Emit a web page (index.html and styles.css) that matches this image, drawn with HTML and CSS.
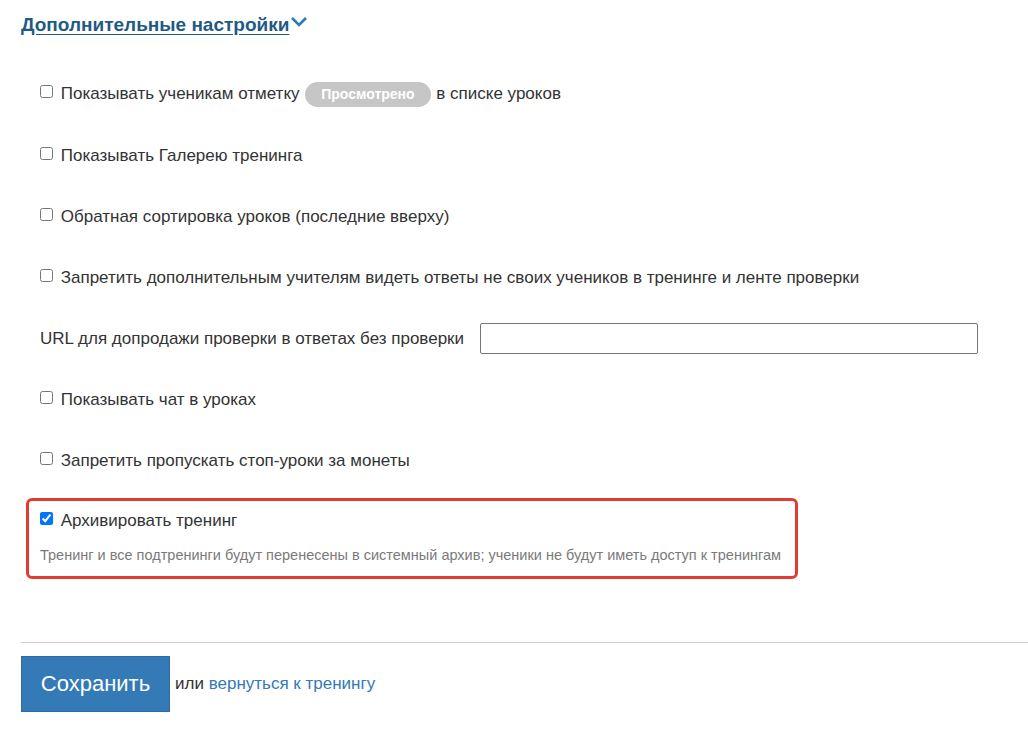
FILE: index.html
```html
<html>
	<head>
		<title>Дополнительные настройки</title>
		<meta charset="utf-8"/>
		<link rel="stylesheet" href="styles.css">
	</head>
	<body>
		<div class="page">
			<a class="toggle" href="#">Дополнительные настройки</a><svg class="chevron" width="18" height="12" viewBox="0 0 18 12"><path d="M2 2 L9 9 L16 2" fill="none" stroke="#2b7bb9" stroke-width="2.6"/></svg>

			<div class="settings">
				<div class="row">
					<label><input type="checkbox"> Показывать ученикам отметку <span class="badge">Просмотрено</span> в списке уроков</label>
				</div>
				<div class="row">
					<label><input type="checkbox"> Показывать Галерею тренинга</label>
				</div>
				<div class="row">
					<label><input type="checkbox"> Обратная сортировка уроков (последние вверху)</label>
				</div>
				<div class="row">
					<label><input type="checkbox"> Запретить дополнительным учителям видеть ответы не своих учеников в тренинге и ленте проверки</label>
				</div>
				<div class="row url-row">
					<span class="url-label">URL для допродажи проверки в ответах без проверки</span>
					<input type="text" class="url-input">
				</div>
				<div class="row">
					<label><input type="checkbox"> Показывать чат в уроках</label>
				</div>
				<div class="row">
					<label><input type="checkbox"> Запретить пропускать стоп-уроки за монеты</label>
				</div>

				<div class="archive">
					<label><input type="checkbox" checked> Архивировать тренинг</label>
					<div class="hint">Тренинг и все подтренинги будут перенесены в системный архив; ученики не будут иметь доступ к тренингам</div>
				</div>
			</div>

			<div class="actions">
				<button class="save">Сохранить</button>
				<span class="or">или <a href="#">вернуться к тренингу</a></span>
			</div>
		</div>
	</body>
</html>
```

FILE: styles.css
```css
body {
	margin: 0;
	background-color: white;
	font-family: "Liberation Sans", Arial, sans-serif;
	color: #333;
}

.page {
	padding-left: 21px;
	padding-top: 14px;
}

.toggle {
	font-size: 19px;
	font-weight: bold;
	color: #1f5a84;
	text-decoration: underline;
	text-underline-offset: 3px;
}

.chevron {
	margin-left: 1px;
	vertical-align: 3px;
}

.settings {
	margin-top: 28px;
}

.row {
	height: 61px;
	display: flex;
	align-items: center;
	padding-left: 15px;
	font-size: 17px;
}

.row input[type=checkbox], .archive input[type=checkbox] {
	margin: 0 3px 0 4px;
	vertical-align: 1px;
}

.badge {
	display: inline-block;
	background-color: #c6c6c6;
	color: white;
	font-weight: bold;
	font-size: 14px;
	padding: 0 16px;
	height: 25px;
	line-height: 25px;
	border-radius: 13px;
	margin: 0 1px;
}

.url-label {
	padding-left: 4px;
	margin-right: 16px;
}

.url-input {
	width: 498px;
	height: 31px;
	border: 1px solid #767676;
	border-radius: 2px;
	box-sizing: border-box;
}

.archive {
	margin: 7px 0 0 5px;
	width: 772px;
	box-sizing: border-box;
	border: 3px solid #e23b32;
	border-radius: 6px;
	padding: 10px 7px 13px 7px;
	font-size: 17px;
}

.hint {
	margin-top: 16px;
	padding-left: 4px;
	font-size: 14.5px;
	color: #7a7a7a;
}

.actions {
	margin-top: 63px;
	border-top: 1px solid #cfcfcf;
	padding-top: 13px;
	display: flex;
	align-items: center;
}

.save {
	width: 149px;
	height: 56px;
	background-color: #337ab7;
	border: 1px solid #2e6da4;
	color: white;
	font-family: "Liberation Sans", Arial, sans-serif;
	font-size: 22px;
}

.or {
	margin-left: 5px;
	font-size: 17px;
	color: #333;
}

.or a {
	color: #337ab7;
	text-decoration: none;
}
```
